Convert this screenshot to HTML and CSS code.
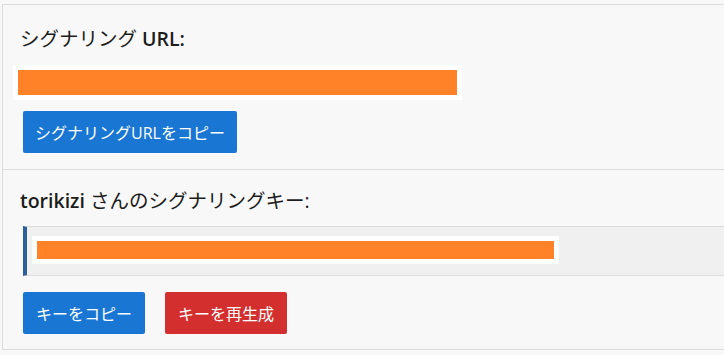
FILE: index.html
```html
<!DOCTYPE html>
<html lang="ja">
<head>
<meta charset="utf-8">
<link rel="stylesheet" href="styles.css">
</head>
<body>
<div class="panel">
  <section class="section url-section">
    <h2 class="heading">シグナリング <b>URL:</b></h2>
    <div class="url-box"><div class="mask url-mask"></div></div>
    <div class="actions">
      <button class="btn btn-blue btn-url">シグナリングURLをコピー</button>
    </div>
  </section>
  <section class="section key-section">
    <h2 class="heading"><b>torikizi</b> さんのシグナリングキー:</h2>
    <div class="key-bar">
      <div class="key-box"><div class="mask key-mask"></div></div>
    </div>
    <div class="actions">
      <button class="btn btn-blue btn-key">キーをコピー</button>
      <button class="btn btn-red btn-key">キーを再生成</button>
    </div>
  </section>
</div>
</body>
</html>
```
FILE: styles.css
```css
html, body {
  margin: 0;
  padding: 0;
  background: #f8f8f8;
  overflow: hidden;
}
body {
  width: 724px;
  height: 355px;
  font-family: "Open Sans", "Noto Sans CJK JP", sans-serif;
  color: #1c1c1c;
}
.panel {
  margin-left: 2px;
  margin-top: 4px;
  border-left: 1px solid #dcdcdc;
  border-top: 1px solid #dcdcdc;
}
.section {
  border-bottom: 1px solid #dcdcdc;
  display: flex;
  flex-direction: column;
}
.heading {
  margin: 0;
  font-size: 19.5px;
  font-weight: normal;
  line-height: 27px;
  padding-left: 17px;
}
.heading b {
  font-weight: 600;
}
.url-section {
  padding: 20px 0 16px;
}
.url-box {
  margin: 13px 0 0 10px;
  width: 439px;
  padding: 5px;
  background: #fff;
}
.mask {
  background: #ff8228;
}
.url-mask {
  height: 25px;
}
.actions {
  display: flex;
  gap: 20px;
  padding-left: 20px;
}
.url-section .actions {
  margin-top: 11px;
}
.btn {
  border: none;
  border-radius: 2px;
  color: #fff;
  font-family: "Open Sans", "Noto Sans CJK JP", sans-serif;
  font-size: 16px;
  height: 42px;
  padding: 0;
  cursor: pointer;
}
.btn-blue {
  background: #1976d2;
}
.btn-red {
  background: #d32f2f;
}
.btn-url {
  width: 214px;
}
.btn-key {
  width: 122px;
}
.key-section {
  padding: 17px 0 15px;
}
.key-bar {
  margin: 12px 0 0 20px;
  background: #f0f0f0;
  border-top: 1px solid #dcdcdc;
  border-bottom: 1px solid #dcdcdc;
  border-left: 4px solid #2b5f9e;
  padding: 9px 0 11px 5px;
}
.key-box {
  width: 517px;
  padding: 5px;
  background: #fff;
}
.key-mask {
  height: 18px;
}
.key-section .actions {
  margin-top: 16px;
}
```
